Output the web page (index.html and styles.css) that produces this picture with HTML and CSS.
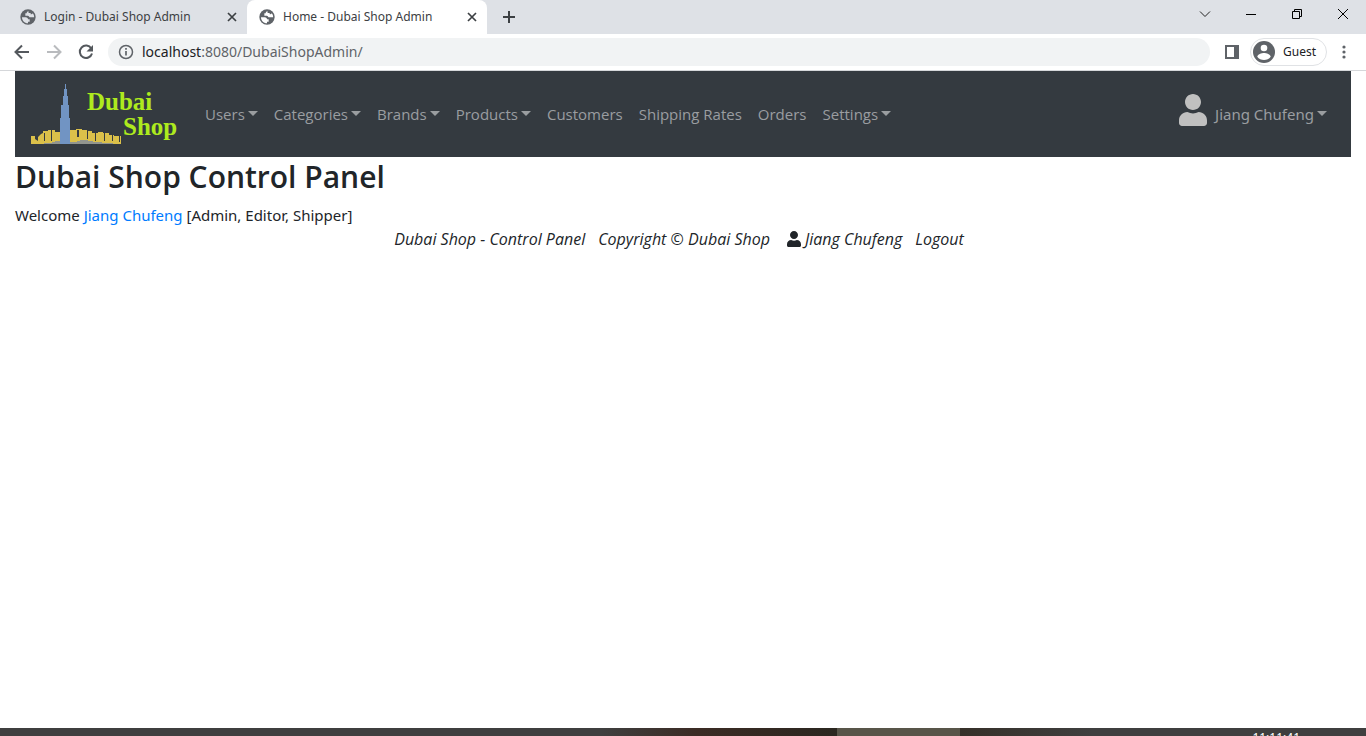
FILE: index.html
```html
<!DOCTYPE html>
<html lang="en">
<head>
<meta charset="utf-8">
<title>Home - Dubai Shop Admin</title>
<link rel="stylesheet" href="styles.css">
</head>
<body>
<svg class="defs" width="0" height="0" aria-hidden="true">
  <symbol id="globe" viewBox="0 0 24 24"><circle cx="12" cy="12" r="11.5" fill="#5f6368"/><path d="M3 12.500h5.500c2.500 0 3.500 1.500 3.500 3h2.500v3.500H12v2.500C6.500 21.500 3 17.500 3 12.500zM12.500 3c-1.500 1.500-2.500 1.500-2.500 3.500H8v3.500h3.500c2 0 2 2.500 4 2.500h5.700c.2-2.500-.6-4.500-2-6.200-.7 1.200-1.700 1.700-3.200 1.700V6h-3z" fill="currentColor"/></symbol>
  <symbol id="close" viewBox="0 0 10 10"><path d="m1 1 8 8M9 1 1 9" fill="none" stroke="#3c4043" stroke-width="1.700"/></symbol>
  <symbol id="user" viewBox="0 0 448 512"><path fill="currentColor" d="M224 256c70.700 0 128-57.300 128-128S294.700 0 224 0 96 57.300 96 128s57.300 128 128 128zm90 32c-28 14-58 22-90 22s-62-8-90-22C60 288 0 348 0 422v42c0 26.500 21.500 48 48 48h352c26.500 0 48-21.500 48-48v-42c0-74-60-134-134-134z"/></symbol>
</svg>

<header class="browser">
  <div class="tabstrip">
    <div class="tab">
      <svg class="favicon"><use href="#globe"/></svg>
      <span class="tab-title">Login - Dubai Shop Admin</span>
      <button class="tab-close" aria-label="Close tab"><svg width="10" height="10"><use href="#close"/></svg></button>
    </div>
    <div class="tab tab-active">
      <svg class="favicon"><use href="#globe"/></svg>
      <span class="tab-title">Home - Dubai Shop Admin</span>
      <button class="tab-close" aria-label="Close tab"><svg width="10" height="10"><use href="#close"/></svg></button>
    </div>
    <button class="new-tab" aria-label="New tab"><svg width="12" height="12" viewBox="0 0 12 12"><path d="M6 0v12M0 6h12" stroke="#3c4043" stroke-width="2"/></svg></button>
    <div class="window-controls">
      <button aria-label="Search tabs"><svg width="12" height="12" viewBox="0 0 12 12"><path d="m1 3.500 5 5 5-5" fill="none" stroke="#222"/></svg></button>
      <button aria-label="Minimize"><svg width="12" height="12" viewBox="0 0 12 12"><path d="M1 6.500h10" stroke="#000"/></svg></button>
      <button aria-label="Restore"><svg width="12" height="12" viewBox="0 0 12 12"><path d="M1.500 3.500h7v7h-7zM3.500 3.500v-2h7v7h-2" fill="none" stroke="#000"/></svg></button>
      <button aria-label="Close"><svg width="12" height="12" viewBox="0 0 12 12"><path d="m1 1 10 10M11 1 1 11" stroke="#000"/></svg></button>
    </div>
  </div>
  <div class="toolbar">
    <div class="nav-buttons">
      <button aria-label="Back"><svg width="16" height="16" viewBox="0 0 16 16"><path d="M15 8H2M8 1.500 1.500 8 8 14.500" fill="none" stroke="#54585d" stroke-width="2"/></svg></button>
      <button aria-label="Forward"><svg width="16" height="16" viewBox="0 0 16 16"><path d="M1 8h13M8 1.500 14.500 8 8 14.500" fill="none" stroke="#b9bbbe" stroke-width="2"/></svg></button>
      <button aria-label="Reload"><svg width="16" height="16" viewBox="0 0 16 16"><path d="M13.300 4.500A6.200 6.200 0 1 0 14 9.500" fill="none" stroke="#54585d" stroke-width="2"/><path d="M15 1v6.500H8.500z" fill="#54585d"/></svg></button>
    </div>
    <div class="address">
      <svg width="16" height="16" viewBox="0 0 16 16"><circle cx="8" cy="8" r="6.500" fill="none" stroke="#5f6368" stroke-width="1.500"/><path d="M8 7v4.500M8 4v1.700" stroke="#5f6368" stroke-width="1.700"/></svg>
      <span class="url"><span class="url-host">localhost</span>:8080/DubaiShopAdmin/</span>
    </div>
    <button class="side-panel" aria-label="Side panel"><svg width="14" height="14" viewBox="0 0 14 14"><path d="M1 1h12v12H1z" fill="none" stroke="#5f6368" stroke-width="2"/><path d="M9 1h4v12H9z" fill="#5f6368"/></svg></button>
    <button class="profile"><svg width="22" height="22" viewBox="0 0 22 22"><circle cx="11" cy="11" r="11" fill="#5f6368"/><circle cx="11" cy="7" r="3.300" fill="#fff"/><path d="M4.300 15.800c0-2.500 4.500-3.800 6.700-3.800s6.700 1.300 6.700 3.800c-1.600 2.200-4 3.200-6.700 3.200s-5.100-1-6.700-3.200z" fill="#fff"/></svg>Guest</button>
    <button class="menu" aria-label="Menu"><svg width="4" height="14" viewBox="0 0 4 14"><g fill="#5f6368"><circle cx="2" cy="2" r="1.600"/><circle cx="2" cy="7" r="1.600"/><circle cx="2" cy="12" r="1.600"/></g></svg></button>
  </div>
</header>

<div class="page">
  <nav class="navbar" aria-label="Main">
    <a class="brand" href="#">
      <svg class="skyline" width="90" height="60" viewBox="0 0 90 60" aria-hidden="true">
        <path fill="#dbc04a" d="M0 52h4v3l3 2 0-4 3-3 2-1v-2h5v-1h7v2h5v13H0zM38 48h1v-2h6v-1h6v1h5v1h5v2h6v-1h5v1h6v2h5v1h7v8H38z"/>
        <path fill="#353a40" d="M13 49h1v8h-1zM20 46h1v11h-1zM46 46h2v7h-2zM56 46h1v9h-1zM64 49h1v8h-1zM73 49h1v8h-1zM81 51h1v6h-1zM88 52h1v6h-1z"/>
        <path fill="#92958f" d="M13 60v-1h8v-1h3v-1h5v3zM39 60v-2h7v-1h3v-1h8v1h5v1h9v1h11v1z"/>
        <path fill="#7194c3" d="M29 60V34h1V21h2V12h1V5h1V0h1v5h1v7h1v9h1v13h1v26z"/>
      </svg>
      <span class="brand-name"><span>Dubai</span><span class="brand-second">Shop</span></span>
    </a>
    <ul class="nav-list">
      <li><a class="caret" href="#">Users</a></li>
      <li><a class="caret" href="#">Categories</a></li>
      <li><a class="caret" href="#">Brands</a></li>
      <li><a class="caret" href="#">Products</a></li>
      <li><a href="#">Customers</a></li>
      <li><a href="#">Shipping Rates</a></li>
      <li><a href="#">Orders</a></li>
      <li><a class="caret" href="#">Settings</a></li>
    </ul>
    <div class="account">
      <svg class="account-icon" width="28" height="32"><use href="#user"/></svg>
      <a class="caret" href="#">Jiang Chufeng</a>
    </div>
  </nav>
  <main>
    <h1>Dubai Shop Control Panel</h1>
    <p class="welcome">Welcome <a href="#">Jiang Chufeng</a> [Admin, Editor, Shipper]</p>
  </main>
  <footer class="footer">
    <span>Dubai Shop - Control Panel</span>
    <span>Copyright © Dubai Shop</span>
    <a class="footer-user" href="#"><svg width="14" height="16"><use href="#user"/></svg>Jiang Chufeng</a>
    <a href="#">Logout</a>
  </footer>
</div>

<div class="taskbar"><span class="clock">11:11:41</span></div>
</body>
</html>
```
FILE: styles.css
```css
* { box-sizing: border-box; }

body {
  display: flex;
  flex-direction: column;
  min-height: 100vh;
  margin: 0;
  background: #fff;
  color: #212529;
  font: 15px/24px "Noto Sans", "Open Sans", sans-serif;
}

button {
  display: flex;
  align-items: center;
  justify-content: center;
  padding: 0;
  border: 0;
  background: none;
  font: inherit;
  color: inherit;
}

a { color: inherit; text-decoration: none; }
svg { display: block; flex: none; }
.defs { position: absolute; }

/* Browser window */
.browser { border-bottom: 1px solid #d5d7da; }

.tabstrip {
  display: flex;
  height: 34px;
  padding-left: 8px;
  background: #dee1e6;
}

.tab {
  display: flex;
  align-items: center;
  width: 239px;
  padding: 0 9px 0 12px;
  color: #3c4043;
  font-size: 12px;
}

.tab-active { width: 240px; border-radius: 8px 8px 0 0; background: #fff; }
.favicon { width: 16px; height: 16px; color: #dee1e6; }
.tab-active .favicon { color: #fff; }
.tab-title { flex: 1; margin-left: 8px; white-space: nowrap; }
.tab-close { width: 12px; height: 16px; }
.new-tab { width: 44px; }
.window-controls { display: flex; margin-left: auto; }
.window-controls button { width: 46px; height: 28px; }

.toolbar {
  display: flex;
  align-items: center;
  height: 36px;
  padding-right: 15px;
}

.nav-buttons { display: flex; padding: 0 6px; }
.nav-buttons button { width: 32px; height: 32px; }

.address {
  display: flex;
  flex: 1;
  align-items: center;
  gap: 8px;
  height: 28px;
  padding: 0 10px;
  border-radius: 14px;
  background: #f1f3f4;
  color: #5f6368;
}

.url { font-size: 14px; }
.url-host { color: #202124; }
.side-panel { width: 40px; height: 28px; padding-left: 4px; }

.profile {
  gap: 8px;
  height: 28px;
  padding: 0 10px 0 2px;
  border: 1px solid #e0e2e5;
  border-radius: 14px;
  color: #202124;
  font-size: 12px;
}

.menu { width: 14px; height: 28px; margin-left: 10px; }

/* Admin page */
.page { flex: 1; padding: 0 15px; }

.navbar {
  display: flex;
  align-items: center;
  height: 86px;
  padding: 0 24px 0 16px;
  background: #343a40;
  color: #9a9da0;
}

.brand { display: flex; width: 166px; }

.brand-name {
  display: flex;
  flex-direction: column;
  margin: 5px 0 0 -34px;
  color: #aeea1e;
  font: bold 25px/25px "Liberation Serif", serif;
}

.brand-second { padding-left: 36px; }

.nav-list {
  display: flex;
  gap: 16px;
  margin: 0;
  padding: 0 0 0 8px;
  list-style: none;
  white-space: nowrap;
  font-family: "Open Sans", sans-serif;
}

.caret::after {
  content: "";
  display: inline-block;
  margin-left: 3px;
  vertical-align: 4px;
  border: 5px solid transparent;
  border-top-color: currentColor;
  border-bottom: 0;
}

.account { display: flex; align-items: center; gap: 8px; margin-left: auto; }
.account-icon { margin-bottom: 8px; color: silver; }

h1 {
  margin: 0 0 8px;
  padding-top: 2px;
  font: 600 30px/36px "Open Sans", sans-serif;
}

.welcome { margin: 0; }
.welcome a { color: #007bff; }

.footer {
  display: flex;
  justify-content: center;
  gap: 13px;
  padding-right: 8px;
  font: italic 16px/24px "Open Sans", sans-serif;
}

.footer-user { display: flex; align-items: center; gap: 4px; margin-left: 4px; }

/* Desktop taskbar */
.taskbar {
  display: flex;
  justify-content: flex-end;
  height: 8px;
  padding-right: 66px;
  overflow: hidden;
  background: linear-gradient(90deg, #3f3f3f 0 44%, #3b2b24 51%, #2b2720 61.300%, #585549 61.300% 70.300%, #363029 70.300%, #3f3f3f 80%);
  color: #fff;
}

.clock { padding-top: 2px; font-size: 12px; line-height: 16px; }
```
